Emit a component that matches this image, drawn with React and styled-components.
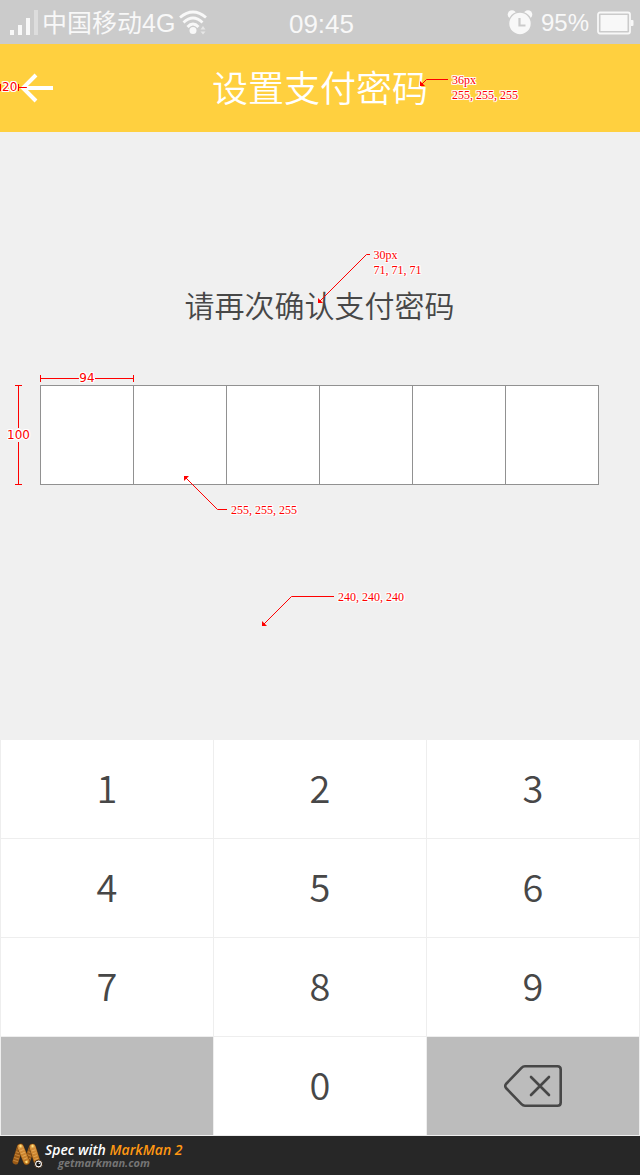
import React from 'react';
import styled, { createGlobalStyle, css } from 'styled-components';

const GlobalStyle = createGlobalStyle`
  *, *::before, *::after { box-sizing: border-box; }
  body { margin: 0; background: #f0f0f0; font-family: "Noto Sans CJK SC", sans-serif; }
  button, input { font: inherit; color: inherit; }
`;

const Page = styled.div`
  display: flex;
  flex-direction: column;
  min-height: 100vh;
  color: #474747;
`;

/* ---------- Status bar ---------- */

const StatusBar = styled.div`
  display: grid;
  grid-template-columns: 1fr auto 1fr;
  align-items: center;
  height: 44px;
  padding: 0 6px 0 9px;
  background: #cbcbcb;
  color: #f8f8f8;
  font-family: "Liberation Sans", "Noto Sans CJK SC", sans-serif;
  font-size: 24px;
  line-height: 44px;
`;

const StatusGroup = styled.div`
  display: flex;
  align-items: center;
  gap: ${(p) => p.$gap}px;
  justify-content: ${(p) => (p.$end ? 'flex-end' : 'flex-start')};
  white-space: nowrap;
`;

const Carrier = styled.span`
  font-size: 25px;
`;

const Clock = styled.time`
  font-size: 26px;
  padding-top: 2px;
`;

/* ---------- Header ---------- */

const Header = styled.header`
  position: relative;
  display: grid;
  grid-template-columns: 1fr auto 1fr;
  align-items: center;
  height: 88px;
  background: #ffd03f;
  color: #fff;
`;

const BackButton = styled.button`
  justify-self: start;
  display: flex;
  padding: 28px 20px;
  border: 0;
  background: none;
`;

const Title = styled.h1`
  position: relative;
  margin: 0;
  padding-bottom: 4px;
  font-size: 36px;
  font-weight: 350;
  line-height: 40px;
`;

/* ---------- Password form ---------- */

const Main = styled.main`
  position: relative;
  flex: 1;
  padding: 150px 41px 255px 40px;
`;

const Prompt = styled.h2`
  position: relative;
  width: fit-content;
  margin: 0 auto 59px;
  font-size: 30px;
  font-weight: 350;
  line-height: 44px;
`;

const PinRow = styled.div`
  position: relative;
  display: flex;
  height: 100px;
  border: 1px solid #919191;
  border-width: 1px 0 1px 1px;
  background: #fff;
`;

const PinCell = styled.div`
  position: relative;
  flex: 1;
  border-right: 1px solid #919191;
`;

const PinInput = styled.input`
  display: block;
  width: 100%;
  height: 100%;
  padding: 0;
  border: 0;
  background: none;
  font-size: 38px;
  text-align: center;
  outline: none;
`;

/* ---------- Keypad ---------- */

const Keypad = styled.div`
  display: grid;
  grid-template-columns: repeat(3, 1fr);
  grid-auto-rows: 98px;
  gap: 1px;
  padding: 0 1px 1px;
  background: #eee;
`;

const keyFace = css`
  display: flex;
  align-items: center;
  justify-content: center;
  padding: 0;
  border: 0;
  background: ${(p) => (p.$muted ? '#bcbcbc' : '#fff')};
  color: #474747;
  font-size: 38px;
  font-weight: 350;
  line-height: 56px;
`;
const Key = styled.button`${keyFace}`;
const DigitKey = styled(Key)`
  padding-bottom: 4px;
`;
const BlankKey = styled.div`${keyFace}`;

/* ---------- Footer ---------- */

const Footer = styled.footer`
  display: flex;
  align-items: center;
  gap: 1px;
  height: 39px;
  padding-left: 12px;
  background: #272727;
  font-family: "Open Sans", sans-serif;
  font-style: italic;
  font-weight: 600;
`;

const Credit = styled.div`
  display: flex;
  flex-direction: column;
  font-size: 14px;
  line-height: 14px;
  color: #fff;
`;

const Product = styled.span`
  color: #ff9712;
`;

const SiteLink = styled.a`
  padding-left: 13px;
  font-size: 11px;
  line-height: 12px;
  font-weight: 700;
  color: #757575;
  text-decoration: none;
`;

/* ---------- Spec annotations ---------- */

const halo = css`
  text-shadow: 1px 0 #fff, -1px 0 #fff, 0 1px #fff, 0 -1px #fff,
    1px 1px #fff, -1px 1px #fff, 1px -1px #fff, -1px -1px #fff;
`;

const CalloutBox = styled.div`
  position: absolute;
  left: ${(p) => p.$left}px;
  top: ${(p) => p.$top}px;
  z-index: 2;
  display: flex;
  align-items: ${(p) => (p.$up ? 'flex-end' : 'flex-start')};
  gap: 4px;
  pointer-events: none;
  color: #f00;
  font: 12px/15px "Liberation Serif", serif;
  white-space: nowrap;
  ${halo}

  svg {
    flex: none;
    margin: ${(p) => (p.$up ? '0 0 8px' : '6px 0 0')};
  }
`;

function Callout({ left, top, rise, run, up, lines }) {
  const elbow = up ? rise + 0.5 : 0.5;
  const tip = up ? 0.5 : rise + 0.5;
  const dir = up ? 1 : -1;
  return (
    <CalloutBox $left={left} $top={top} $up={up}>
      <svg width={run} height={rise + 1} overflow="visible" aria-hidden="true">
        <path
          d={`M.5 ${tip} L${rise + 0.5} ${elbow} H${run}`}
          fill="none"
          stroke="#f00"
        />
        <path d={`M0 ${tip - dir * 0.5} h5 l-5 ${dir * 5}z`} fill="#f00" />
      </svg>
      <div>
        {lines.map((line) => (
          <div key={line}>{line}</div>
        ))}
      </div>
    </CalloutBox>
  );
}

const dimension = css`
  position: absolute;
  display: flex;
  align-items: center;
  color: #f00;
  font: 12px/14px "DejaVu Sans", sans-serif;
  pointer-events: none;
  ${halo}
`;

const WidthMark = styled.div`
  ${dimension}
  left: -1px;
  right: -1px;
  top: -15px;
  height: 14px;
  &::before, &::after {
    content: "";
    flex: 1;
    height: 7px;
    background: linear-gradient(#f00, #f00) center / 100% 1px no-repeat;
  }
  &::before { border-left: 1px solid #f00; }
  &::after { border-right: 1px solid #f00; }
`;

const HeightMark = styled.div`
  ${dimension}
  flex-direction: column;
  left: -34px;
  width: 23px;
  top: -1px;
  bottom: -1px;
  &::before, &::after {
    content: "";
    flex: 1;
    width: 7px;
    background: linear-gradient(#f00, #f00) center / 1px 100% no-repeat;
  }
  &::before { border-top: 1px solid #f00; }
  &::after { border-bottom: 1px solid #f00; }
`;

const InsetMark = styled.div`
  ${dimension}
  gap: 1px;
  left: 0;
  top: 36px;
  height: 14px;
  width: 27px;
  &::before, &::after {
    content: "";
    height: 7px;
    border-left: 1px solid #f00;
  }
  &::after {
    flex: 1;
    background: linear-gradient(#f00, #f00) center / 100% 1px no-repeat;
  }
`;

/* ---------- Icons ---------- */

const SignalIcon = () => (
  <svg width="29" height="26" viewBox="0 0 29 26" fill="currentColor" aria-label="Signal">
    <rect x="1" y="20" width="4" height="5" />
    <rect x="9" y="15" width="4" height="10" />
    <rect x="17" y="8" width="4" height="17" />
    <rect x="25" y="0" width="4" height="25" opacity=".4" />
  </svg>
);

const WifiIcon = () => (
  <svg width="28" height="26" viewBox="0 0 28 26" fill="none" stroke="currentColor" strokeWidth="2.8" aria-label="Wi-Fi">
    <path d="M1 7.500Q14-3.500 27 7.500M4.500 12.500Q14 3.500 23.500 12.500M8.500 17Q14 11 19.500 17" />
    <circle cx="14" cy="20.500" r="3.500" fill="currentColor" stroke="none" />
    <path d="M21.500 19.500l2.500-3.500L26.500 19.500zM21.500 21.500l2.500 3 2.500-3z" fill="currentColor" stroke="none" opacity=".6" />
  </svg>
);

const AlarmIcon = () => (
  <svg width="26" height="26" viewBox="0 0 26 26" aria-label="Alarm">
    <circle cx="5" cy="4.500" r="4.300" fill="currentColor" />
    <circle cx="21" cy="4.500" r="4.300" fill="currentColor" />
    <circle cx="13" cy="13.500" r="11.400" fill="currentColor" stroke="#cbcbcb" strokeWidth="1.400" />
    <path d="M12.500 8v7.500h6" fill="none" stroke="#cbcbcb" strokeWidth="2.200" />
  </svg>
);

const BatteryIcon = () => (
  <svg width="37" height="24" viewBox="0 0 37 24" fill="none" aria-label="Battery">
    <rect x="1" y="1.500" width="32" height="21" rx="2" stroke="currentColor" strokeWidth="1.800" />
    <rect x="3.500" y="4" width="27" height="16" fill="currentColor" />
    <path d="M34 9h1.500q1 0 1 1v4q0 1-1 1H34z" fill="currentColor" />
  </svg>
);

const ArrowIcon = () => (
  <svg width="34" height="32" viewBox="0 0 34 32" fill="none" stroke="#fff" strokeWidth="4">
    <path d="M16 3 3 16 16 29M3 16H33" />
  </svg>
);

const DeleteIcon = () => (
  <svg width="58" height="42" viewBox="0 0 58 42" fill="none" stroke="#474747" strokeWidth="2.600" strokeLinejoin="round" strokeLinecap="round">
    <path d="M21 1.300H53.500Q56.700 1.300 56.700 4.500V37.500Q56.700 40.700 53.500 40.700H21Q19 40.700 17.500 39.200L2 23Q.500 21 2 19L17.500 2.800Q19 1.300 21 1.300Z" />
    <path d="M27 12 45 30M45 12 27 30" />
  </svg>
);

const MarkManLogo = () => (
  <svg width="32" height="28" viewBox="0 0 32 28" fill="none" strokeLinecap="round" aria-hidden="true">
    <defs>
      <linearGradient id="worm" gradientUnits="userSpaceOnUse" x1="0" y1="2" x2="0" y2="24">
        <stop offset="0" stopColor="#dc9640" />
        <stop offset="1" stopColor="#b8701c" />
      </linearGradient>
    </defs>
    <path d="M3.500 19.500 8 5M15 19.500 20 5" stroke="#9a5a16" strokeWidth="6" />
    <path d="M3.500 19.500 8 5M15 19.500 20 5" stroke="#e0a050" strokeWidth="5" strokeDasharray="1 2" strokeLinecap="butt" opacity=".6" />
    <path d="M8.500 5 14.500 19.500M20.500 5 25.500 21" stroke="#5e360c" strokeWidth="7" />
    <path d="M8.500 5 14.500 19.500M20.500 5 25.500 21" stroke="url(#worm)" strokeWidth="6" />
    <path d="M8.500 5 14.500 19.500M20.500 5 25.500 21" stroke="#f3bd6c" strokeWidth="4" strokeDasharray="1 2" strokeLinecap="butt" opacity=".6" />
    <circle cx="8.500" cy="4" r="1.200" fill="#ffe27a" />
    <circle cx="20.500" cy="4" r="1.200" fill="#ffe27a" />
    <circle cx="14.500" cy="20" r="1.200" fill="#ffe27a" />
    <circle cx="26.500" cy="22" r="4" fill="#fff" stroke="#3a220a" strokeWidth="1" />
    <circle cx="26.500" cy="22" r="2.300" fill="#111" />
    <circle cx="27.300" cy="21.200" r=".7" fill="#fff" />
  </svg>
);

const KEYS = ['1', '2', '3', '4', '5', '6', '7', '8', '9'];
const PIN_LENGTH = 6;

export default function App() {
  return (
    <Page>
      <GlobalStyle />
      <StatusBar>
        <StatusGroup $gap={4}>
          <SignalIcon />
          <Carrier>中国移动4G</Carrier>
          <WifiIcon />
        </StatusGroup>
        <Clock>09:45</Clock>
        <StatusGroup $gap={8} $end>
          <AlarmIcon />
          <span>95%</span>
          <BatteryIcon />
        </StatusGroup>
      </StatusBar>

      <Header>
        <BackButton type="button" aria-label="返回">
          <ArrowIcon />
        </BackButton>
        <Title>
          设置支付密码
          <Callout left={208} top={7} rise={6} run={28} lines={['36px', '255, 255, 255']} />
        </Title>
        <InsetMark>20</InsetMark>
      </Header>

      <Main>
        <Prompt id="pin-prompt">
          请再次确认支付密码
          <Callout left={133} top={-34} rise={48} run={52} lines={['30px', '71, 71, 71']} />
        </Prompt>
        <PinRow role="group" aria-labelledby="pin-prompt">
          {Array.from({ length: PIN_LENGTH }, (_, i) => (
            <PinCell key={i}>
              <PinInput type="password" inputMode="numeric" maxLength={1} aria-label={`第${i + 1}位`} />
              {i === 0 && <WidthMark>94</WidthMark>}
              {i === 1 && (
                <Callout left={50} top={90} rise={33} run={43} up lines={['255, 255, 255']} />
              )}
            </PinCell>
          ))}
          <HeightMark>100</HeightMark>
        </PinRow>
        <Callout left={262} top={458} rise={29} run={72} lines={['240, 240, 240']} />
      </Main>

      <Keypad>
        {KEYS.map((k) => (
          <DigitKey key={k} type="button">{k}</DigitKey>
        ))}
        <BlankKey $muted />
        <DigitKey type="button">0</DigitKey>
        <Key type="button" $muted aria-label="删除">
          <DeleteIcon />
        </Key>
      </Keypad>

      <Footer>
        <MarkManLogo />
        <Credit>
          <span>Spec with <Product>MarkMan 2</Product></span>
          <SiteLink href="#">getmarkman.com</SiteLink>
        </Credit>
      </Footer>
    </Page>
  );
}
